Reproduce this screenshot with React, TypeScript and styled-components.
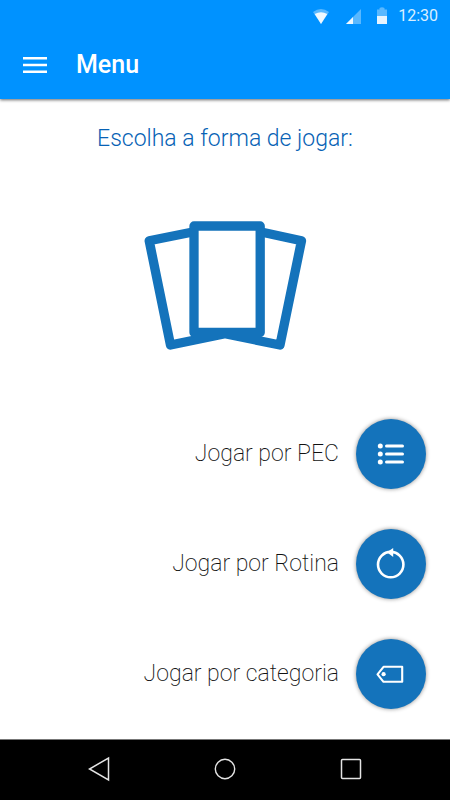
import React from "react";
import styled, { createGlobalStyle } from "styled-components";

const BLUE = "#0092ff";
const DEEP_BLUE = "#1473bb";

const GlobalStyle = createGlobalStyle`
  *, *::before, *::after { box-sizing: border-box; }
  body { margin: 0; background: #fff; font-family: Roboto, "Noto Sans", sans-serif; }
  button { border: 0; padding: 0; background: none; color: inherit; font: inherit; cursor: pointer; }
  svg { display: block; }
`;

const Screen = styled.div`
  display: flex;
  flex-direction: column;
  min-height: 100vh;
`;

const Header = styled.header`
  background: ${BLUE};
  color: #fff;
  box-shadow: 0 1px 3px rgba(0, 0, 0, 0.6);
`;

const StatusBar = styled.div`
  display: flex;
  justify-content: flex-end;
  align-items: center;
  height: 32px;
  padding: 0 12px;
`;

const StatusIcons = styled.div`
  display: flex;
  gap: 14px;
  margin-right: 10px;
`;

const Clock = styled.time`
  font-size: 16px;
  line-height: 32px;
  color: #d9efff;
`;

const Toolbar = styled.div`
  display: flex;
  align-items: center;
  gap: 24px;
  height: 67px;
  padding: 0 18px 2px;
`;

const MenuButton = styled.button`
  display: grid;
  place-items: center;
  width: 34px;
  height: 34px;
`;

const Title = styled.h1`
  margin: 0;
  font-size: 25px;
  line-height: 32px;
  font-weight: 500;
`;

const Content = styled.main`
  flex: 1;
  display: flex;
  flex-direction: column;
  align-items: center;
  padding: 24px 24px 30px;
`;

const Prompt = styled.h2`
  margin: 0 0 61px;
  font-size: 23px;
  line-height: 32px;
  font-weight: 300;
  color: #0762b5;
`;

const OptionList = styled.ul`
  align-self: stretch;
  display: flex;
  flex-direction: column;
  align-items: flex-end;
  gap: 40px;
  margin: auto 0 0;
  padding: 0;
  list-style: none;
`;

const OptionButton = styled.button`
  display: flex;
  align-items: center;
  gap: 17px;
  font-size: 23px;
  line-height: 32px;
  font-weight: 200;
  color: #111;
`;

const OptionIcon = styled.span`
  display: grid;
  place-items: center;
  width: 70px;
  height: 70px;
  border-radius: 50%;
  background: ${DEEP_BLUE};
  box-shadow: 0 0 4px rgba(0, 0, 0, 0.45);
`;

const NavBar = styled.nav`
  display: flex;
  justify-content: space-between;
  align-items: center;
  height: 61px;
  padding: 0 79px 2px;
  background: #000;
  border-top: 1px solid #777;
`;

const NavButton = styled.button`
  display: grid;
  place-items: center;
  width: 40px;
  height: 40px;
`;

const WifiIcon = () => (
  <svg width="18" height="18" viewBox="0 0 18 18" aria-hidden="true">
    <path d="M1 5Q9 -1 17 5L9 17Z" fill="#fff" opacity="0.35" />
    <path d="M2.700 7Q9 3.500 15.300 7L9 17Z" fill="#fff" opacity="0.9" />
  </svg>
);

const SignalIcon = () => (
  <svg width="18" height="18" viewBox="0 0 18 18" aria-hidden="true">
    <path d="M17 2V17H2Z" fill="#fff" opacity="0.35" />
    <path d="M9 10V17H2Z" fill="#fff" opacity="0.9" />
  </svg>
);

const BatteryIcon = () => (
  <svg width="12" height="18" viewBox="0 0 12 18" aria-hidden="true">
    <path d="M1 9V2.500H3.500V1Q6 -.5 8.500 1V2.500H11V9Z" fill="#fff" opacity="0.35" />
    <path d="M1 9H11V17H1Z" fill="#fff" opacity="0.9" />
  </svg>
);

const HamburgerIcon = () => (
  <svg width="24" height="16" viewBox="0 0 24 16" fill="#fff" aria-hidden="true">
    <rect y="0" width="24" height="2.500" />
    <rect y="6.750" width="24" height="2.500" />
    <rect y="13.500" width="24" height="2.500" />
  </svg>
);

const CardsIcon = () => (
  <svg
    width="170"
    height="138"
    viewBox="0 0 170 138"
    fill="none"
    stroke={DEEP_BLUE}
    strokeWidth="9.300"
    strokeLinejoin="round"
    aria-hidden="true"
  >
    <path d="M54 15.700L9.200 24.800L30.500 129L85 117.700L140 129L161.500 24.800L120 15.700" />
    <rect x="54" y="10" width="66.200" height="106.500" />
  </svg>
);

const ListIcon = () => (
  <svg width="28" height="22" viewBox="0 0 28 22" aria-hidden="true">
    {[3, 11, 19].map((y) => (
      <g key={y}>
        <circle cx="3.300" cy={y} r="2.500" fill="#fff" />
        <path d={`M9.500 ${y}H25.500`} stroke="#fff" strokeWidth="3" strokeLinecap="round" />
      </g>
    ))}
  </svg>
);

const RoutineIcon = () => (
  <svg width="32" height="34" viewBox="0 0 32 34" aria-hidden="true">
    <circle cx="15.700" cy="17.600" r="12.700" fill="none" stroke="#fff" strokeWidth="2.600" />
    <path d="M18.200 1V10L12 5.200Z" fill="#fff" />
  </svg>
);

const TagIcon = () => (
  <svg width="30" height="20" viewBox="0 0 30 20" aria-hidden="true">
    <path
      d="M7.500 2.800H26.200V17.800H7.500L1.500 10.300Z"
      fill="none"
      stroke="#fff"
      strokeWidth="2.100"
      strokeLinejoin="round"
    />
    <circle cx="7.600" cy="10.200" r="2.100" fill="#fff" />
  </svg>
);

const BackIcon = () => (
  <svg width="24" height="26" viewBox="0 0 24 26" aria-hidden="true">
    <path d="M21.500 2V24L2.500 13Z" fill="none" stroke="#e4e4e4" strokeWidth="1.500" />
  </svg>
);

const HomeIcon = () => (
  <svg width="24" height="24" viewBox="0 0 24 24" aria-hidden="true">
    <circle cx="12" cy="12" r="9.700" fill="none" stroke="#e4e4e4" strokeWidth="1.400" />
  </svg>
);

const RecentsIcon = () => (
  <svg width="24" height="24" viewBox="0 0 24 24" aria-hidden="true">
    <rect x="2.500" y="2.500" width="19" height="19" rx="1" fill="none" stroke="#e4e4e4" strokeWidth="1.500" />
  </svg>
);

const options = [
  { label: "Jogar por PEC", Icon: ListIcon },
  { label: "Jogar por Rotina", Icon: RoutineIcon },
  { label: "Jogar por categoria", Icon: TagIcon },
];

const navItems = [
  { label: "Voltar", Icon: BackIcon },
  { label: "Início", Icon: HomeIcon },
  { label: "Recentes", Icon: RecentsIcon },
];

export default function App() {
  return (
    <Screen>
      <GlobalStyle />
      <Header>
        <StatusBar>
          <StatusIcons>
            <WifiIcon />
            <SignalIcon />
            <BatteryIcon />
          </StatusIcons>
          <Clock>12:30</Clock>
        </StatusBar>
        <Toolbar>
          <MenuButton type="button" aria-label="Abrir menu">
            <HamburgerIcon />
          </MenuButton>
          <Title>Menu</Title>
        </Toolbar>
      </Header>
      <Content>
        <Prompt>Escolha a forma de jogar:</Prompt>
        <CardsIcon />
        <OptionList>
          {options.map(({ label, Icon }) => (
            <li key={label}>
              <OptionButton type="button">
                {label}
                <OptionIcon>
                  <Icon />
                </OptionIcon>
              </OptionButton>
            </li>
          ))}
        </OptionList>
      </Content>
      <NavBar>
        {navItems.map(({ label, Icon }) => (
          <NavButton key={label} type="button" aria-label={label}>
            <Icon />
          </NavButton>
        ))}
      </NavBar>
    </Screen>
  );
}
